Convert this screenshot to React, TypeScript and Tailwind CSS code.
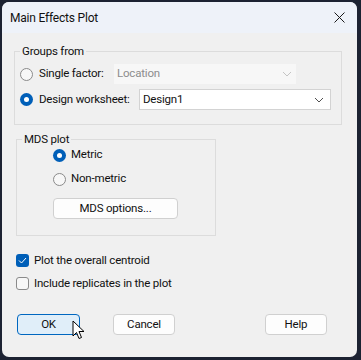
import React from 'react';

const Radio = ({ checked }: { checked?: boolean }) =>
  checked ? (
    <span className="w-[13px] h-[13px] rounded-full bg-[#005fb8] flex items-center justify-center shrink-0">
      <span className="w-[5px] h-[5px] rounded-full bg-white" />
    </span>
  ) : (
    <span className="w-[13px] h-[13px] rounded-full border border-[#8a8a8a] bg-[#f7f7f7] shrink-0" />
  );

const Chevron = ({ color }: { color: string }) => (
  <svg width="10" height="6" viewBox="0 0 10 6" fill="none">
    <path d="M1 1L5 5L9 1" stroke={color} strokeWidth="1" />
  </svg>
);

const Checkbox = ({ checked }: { checked?: boolean }) =>
  checked ? (
    <span className="w-[13px] h-[13px] rounded-[3px] bg-[#005fb8] flex items-center justify-center shrink-0">
      <svg width="9" height="7" viewBox="0 0 9 7" fill="none">
        <path d="M1 3.5L3.5 6L8 1" stroke="white" strokeWidth="1" />
      </svg>
    </span>
  ) : (
    <span className="w-[13px] h-[13px] rounded-[3px] border border-[#8a8a8a] bg-[#f7f7f7] shrink-0" />
  );

export default function App() {
  return (
    <div
      className="w-[361px] h-[360px] bg-[#1c2232] pt-[2px] pl-[2px] text-[11.5px] tracking-[-0.2px] text-[#111] whitespace-nowrap"
      style={{ fontFamily: 'Roboto, "Noto Sans", sans-serif' }}
    >
      <div className="relative w-[355px] h-[355px] rounded-[7px] bg-[#f0f0f0] overflow-hidden flex flex-col">
        <div className="h-[31px] bg-[#eef2f9] flex items-center justify-between pl-[8px] pr-[12px] shrink-0">
          <span className="text-[12px]">Main Effects Plot</span>
          <svg width="11" height="11" viewBox="0 0 11 11" fill="none">
            <path d="M0.5 0.5L10.5 10.5M10.5 0.5L0.5 10.5" stroke="#1a1a1a" strokeWidth="1" />
          </svg>
        </div>

        <div className="flex flex-col pt-[10px]">
          <fieldset className="ml-[12px] w-[328px] border border-[#dcdcdc] pl-[5px] pr-[10px] pb-[14px] pt-[2px]">
            <legend className="px-[2px] leading-[16px]">Groups from</legend>
            <div className="flex items-center h-[20px] mt-[3px]">
              <Radio />
              <span className="ml-[6px] w-[75px]">Single factor:</span>
              <div className="w-[182px] h-[20px] bg-[#f7f7f7] flex items-center justify-between pl-[3px] pr-[4px] text-[#8d8d8d]">
                <span>Location</span>
                <Chevron color="#c4c4c4" />
              </div>
            </div>
            <div className="flex items-center h-[21px] mt-[5px]">
              <Radio checked />
              <span className="ml-[6px] w-[100px]">Design worksheet:</span>
              <div className="w-[192px] h-[21px] bg-white border border-[#d3d3d3] flex items-center justify-between pl-[3px] pr-[6px]">
                <span>Design1</span>
                <Chevron color="#505050" />
              </div>
            </div>
          </fieldset>

          <fieldset className="ml-[14px] mt-[6px] w-[200px] h-[105px] border border-[#dcdcdc]">
            <legend className="ml-[5px] px-[2px] leading-[16px]">MDS plot</legend>
            <div className="pl-[36px]">
              <div className="flex items-center h-[18px] -mt-[1px]">
                <Radio checked />
                <span className="ml-[5px]">Metric</span>
              </div>
              <div className="flex items-center h-[18px] mt-[6px]">
                <Radio />
                <span className="ml-[5px]">Non-metric</span>
              </div>
              <button className="mt-[10px] w-[125px] h-[21px] bg-[#fdfdfd] border border-[#d0d0d0] rounded-[4px] flex items-center justify-center">
                MDS options...
              </button>
            </div>
          </fieldset>

          <div className="ml-[14px] mt-[18px] flex flex-col gap-[10px]">
            <div className="flex items-center h-[13px]">
              <Checkbox checked />
              <span className="ml-[5px]">Plot the overall centroid</span>
            </div>
            <div className="flex items-center h-[13px]">
              <Checkbox />
              <span className="ml-[5px]">Include replicates in the plot</span>
            </div>
          </div>

          <div className="flex mt-[24px] ml-[15px]">
            <button className="w-[63px] h-[21px] bg-[#e0eef9] border border-[#0067c0] rounded-[4px] flex items-center justify-center">
              OK
            </button>
            <button className="ml-[33px] w-[62px] h-[21px] bg-[#fdfdfd] border border-[#d0d0d0] rounded-[4px] flex items-center justify-center">
              Cancel
            </button>
            <button className="ml-[90px] w-[62px] h-[21px] bg-[#fdfdfd] border border-[#d0d0d0] rounded-[4px] flex items-center justify-center">
              Help
            </button>
          </div>
        </div>

        {/* mouse pointer over OK */}
        <svg className="absolute left-[70px] top-[318px]" width="13" height="20" viewBox="0 0 13 20" fill="none">
          <path d="M1 1V16L4.5 12.5L7 18.5L9.5 17.5L7 11.5H12L1 1Z" fill="white" stroke="black" strokeWidth="1" strokeLinejoin="round" />
        </svg>
      </div>
    </div>
  );
}
